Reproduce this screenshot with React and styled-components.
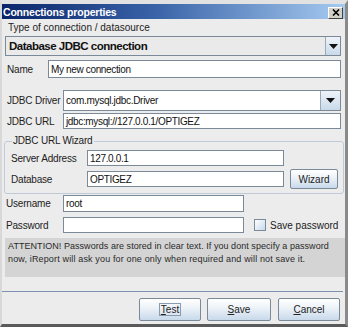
import React from "react";
import styled, { createGlobalStyle } from "styled-components";

const Global = createGlobalStyle`
  html, body { margin: 0; padding: 0; background: #ececec; }
  body { font-family: "Liberation Sans", Arial, sans-serif; }
  * { box-sizing: border-box; }
`;

const Window = styled.div`
  width: 348px;
  height: 327px;
  background: #ececec;
  border-left: 2px solid #d8d8d8;
  border-right: 3px solid #8a8a8a;
  border-bottom: 3px solid #5a5a5a;
  border-top: 4px solid #e2e2e2;
  display: flex;
  flex-direction: column;
  overflow: hidden;
  font-size: 10px;
  color: #1a1a1a;
`;

const TitleBar = styled.div`
  height: 15px;
  display: flex;
  align-items: center;
  justify-content: space-between;
  padding: 0 2px 0 1px;
  background: linear-gradient(90deg, #0a246a 0%, #3a64a8 45%, #a6caf0 100%);
`;

const Title = styled.span`
  color: #fff;
  font-weight: bold;
  font-size: 10.5px;
  letter-spacing: -0.2px;
`;

const CloseBtn = styled.div`
  width: 15px;
  height: 12px;
  margin-top: 2px;
  background: #d4d0c8;
  border: 1px solid;
  border-color: #fff #404040 #404040 #fff;
  display: flex;
  align-items: center;
  justify-content: center;
`;

const Content = styled.div`
  flex: 1;
  display: flex;
  flex-direction: column;
  padding: 0 1px 0 3px;
`;

const Caption = styled.div`
  height: 17px;
  line-height: 18px;
  padding-left: 3px;
  font-size: 10px;
  color: #222;
`;

const Combo = styled.div`
  height: ${(p) => p.$h}px;
  display: flex;
  border: 1px solid #7a8a99;
  background: #fff;
  flex: 1;
`;

const ComboText = styled.div`
  flex: 1;
  display: flex;
  align-items: center;
  padding-left: ${(p) => (p.$big ? 3 : 2)}px;
  font-size: ${(p) => (p.$big ? "11.5px" : "10px")};
  font-weight: ${(p) => (p.$big ? "bold" : "normal")};
  letter-spacing: ${(p) => (p.$big ? "-0.5px" : "-0.3px")};
  color: #111;
  background: ${(p) => (p.$big ? "#eaeaea" : "#fff")};
`;

const ArrowBtn = styled.div`
  width: ${(p) => p.$w}px;
  border-left: 1px solid #9aaabb;
  background: linear-gradient(180deg, #eef3f9 0%, #c9d9ea 100%);
  display: flex;
  align-items: center;
  justify-content: center;
`;

const Row = styled.div`
  display: flex;
  align-items: center;
  height: ${(p) => p.$h}px;
  margin-top: ${(p) => p.$mt || 0}px;
  margin-right: 3px;
`;

const Label = styled.div`
  width: ${(p) => p.$w}px;
  padding-left: ${(p) => p.$pl || 0}px;
  font-size: 10px;
  letter-spacing: -0.2px;
  color: #222;
  flex-shrink: 0;
`;

const Field = styled.div`
  height: ${(p) => p.$h || 16}px;
  width: ${(p) => (p.$w ? p.$w + "px" : "auto")};
  flex: ${(p) => (p.$w ? "none" : 1)};
  background: #fff;
  border: 1px solid #7a8a99;
  display: flex;
  align-items: center;
  padding-left: 2px;
  font-size: 10px;
  letter-spacing: -0.35px;
  color: #111;
`;

const Wizard = styled.fieldset`
  margin: 6px 0 0 -1px;
  padding: 0 2px 4px 6px;
  border: 1px solid #c0cad6;
  border-radius: 3px;
  min-width: 0;
`;

const Legend = styled.legend`
  padding: 0 2px 0 1px;
  margin-left: 1px;
  font-size: 10px;
  line-height: 12px;
  letter-spacing: -0.2px;
  color: #222;
`;

const Button = styled.div`
  width: ${(p) => p.$w}px;
  height: ${(p) => p.$h}px;
  border: 1px solid #7a8a99;
  border-radius: 2px;
  background: linear-gradient(180deg, #ffffff 0%, #eef3f8 40%, #c8d9eb 100%);
  display: flex;
  align-items: center;
  justify-content: center;
  font-size: 10px;
  color: #222;
  margin-left: ${(p) => p.$ml || 0}px;
`;

const Focus = styled.span`
  border: 1px solid #8a9ab0;
  padding: 0 1px;
  line-height: 11px;
`;

const U = styled.span`
  text-decoration: underline;
`;

const Check = styled.div`
  width: 12px;
  height: 12px;
  margin-left: 10px;
  border: 1px solid #7a8a99;
  background: linear-gradient(135deg, #ffffff 0%, #c8d9eb 100%);
`;

const CheckLabel = styled.span`
  margin-left: 4px;
  font-size: 10px;
  color: #222;
`;

const Attention = styled.div`
  margin: 5px -2px 0 0;
  height: 39px;
  background: #d4d4d4;
  padding: 2px 2px 0 3px;
  font-size: 9px;
  line-height: 13px;
  color: #2a2a2a;
  overflow: hidden;
`;

const AttLine = styled.div`
  white-space: nowrap;
  letter-spacing: ${(p) => p.$ls}px;
`;

const Separator = styled.div`
  margin: 14px 1px 0 -3px;
  height: 1px;
  background: #8090b0;
`;

const Buttons = styled.div`
  display: flex;
  justify-content: flex-end;
  margin-top: 6px;
  padding-right: 4px;
`;

const Triangle = () => (
  <svg width="9" height="5" viewBox="0 0 9 5">
    <path d="M0 0H9L4.5 5Z" fill="#111" />
  </svg>
);

export default function App() {
  return (
    <>
      <Global />
      <Window>
        <TitleBar>
          <Title>Connections properties</Title>
          <CloseBtn>
            <svg width="8" height="7" viewBox="0 0 8 7">
              <path d="M1 0.5L7 6.5M7 0.5L1 6.5" stroke="#000" strokeWidth="1.6" />
            </svg>
          </CloseBtn>
        </TitleBar>
        <Content>
          <Caption>Type of connection / datasource</Caption>
          <Row $h={20}>
            <Combo $h={20}>
              <ComboText $big>Database JDBC connection</ComboText>
              <ArrowBtn $w={15}>
                <Triangle />
              </ArrowBtn>
            </Combo>
          </Row>
          <Row $h={18} $mt={4}>
            <Label $w={43} $pl={2}>Name</Label>
            <Field $h={18}>My new connection</Field>
          </Row>
          <Row $h={21} $mt={12}>
            <Label $w={58} $pl={2}>JDBC Driver</Label>
            <Combo $h={21}>
              <ComboText>com.mysql.jdbc.Driver</ComboText>
              <ArrowBtn $w={20}>
                <Triangle />
              </ArrowBtn>
            </Combo>
          </Row>
          <Row $h={16} $mt={2}>
            <Label $w={58} $pl={2}>JDBC URL</Label>
            <Field>jdbc:mysql://127.0.0.1/OPTIGEZ</Field>
          </Row>
          <Wizard>
            <Legend>JDBC URL Wizard</Legend>
            <Row $h={16} $mt={3}>
              <Label $w={76}>Server Address</Label>
              <Field $w={197}>127.0.0.1</Field>
            </Row>
            <Row $h={20} $mt={3}>
              <Label $w={76}>Database</Label>
              <Field $w={197}>OPTIGEZ</Field>
              <Button $w={54} $h={20} $ml={6}>Wizard</Button>
            </Row>
          </Wizard>
          <Row $h={17} $mt={1}>
            <Label $w={58} $pl={1}>Username</Label>
            <Field $w={181} $h={17}>root</Field>
          </Row>
          <Row $h={16} $mt={5}>
            <Label $w={58} $pl={1}>Password</Label>
            <Field $w={181} />
            <Check />
            <CheckLabel>Save password</CheckLabel>
          </Row>
          <Attention>
            <AttLine $ls={0.05}>
              ATTENTION! Passwords are stored in clear text. If you dont specify a password
            </AttLine>
            <AttLine $ls={0.15}>
              now, iReport will ask you for one only when required and will not save it.
            </AttLine>
          </Attention>
          <Separator />
          <Buttons>
            <Button $w={62} $h={23}>
              <Focus>
                <U>T</U>est
              </Focus>
            </Button>
            <Button $w={64} $h={23} $ml={6}>
              <span>
                <U>S</U>ave
              </span>
            </Button>
            <Button $w={62} $h={23} $ml={7}>
              <span>
                <U>C</U>ancel
              </span>
            </Button>
          </Buttons>
        </Content>
      </Window>
    </>
  );
}
